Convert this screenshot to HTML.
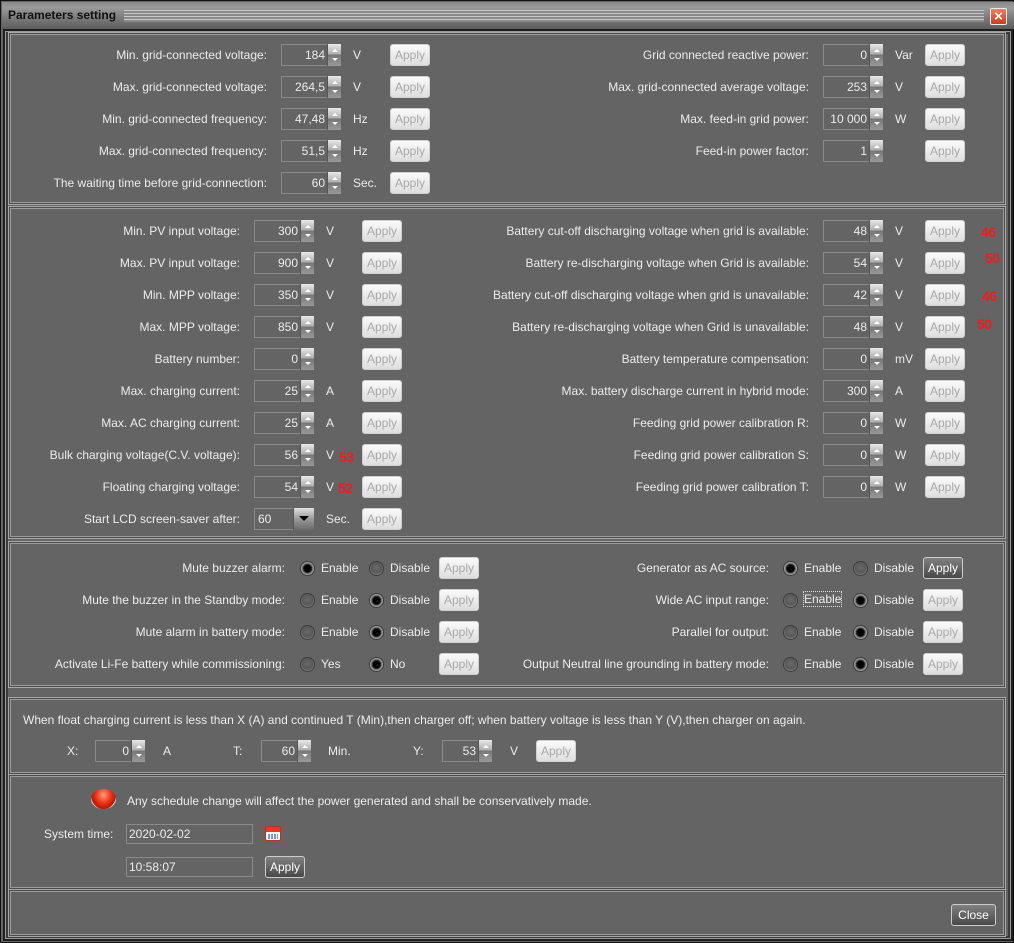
<!DOCTYPE html>
<html><head><meta charset="utf-8">
<style>
*{margin:0;padding:0;box-sizing:border-box}
body{width:1014px;height:943px;background:#2a2a2a;font-family:"Liberation Sans",sans-serif;font-size:12px;color:#ececec;position:relative;overflow:hidden}
.a{position:absolute}
#win{position:absolute;left:0;top:0;width:1014px;height:943px;background:#646464;border:1px solid #111}
#title{position:absolute;left:1px;top:1px;width:1012px;height:27px;background:linear-gradient(#8a8a8a,#9a9a9a 20%,#7a7a7a 60%,#5c5c5c)}
#title .t{position:absolute;left:6px;top:6px;font-weight:bold;color:#111;font-size:12px}
#title .lines{position:absolute;left:122px;right:30px;top:8px;height:12px;background:repeating-linear-gradient(#c8c8c8 0 1px,#8a8a8a 1px 3px)}
#x{position:absolute;left:989px;top:7px;width:17px;height:17px;background:linear-gradient(#f08060,#c83c20);border:1px solid #eee;border-radius:2px;color:#fff;font-size:15px;font-weight:bold;line-height:15px;text-align:center}
#frame{position:absolute;left:2px;top:28px;width:1010px;height:912px;border:2px solid #1e1e1e;box-shadow:inset 0 0 0 1px #9a9a9a,inset 0 0 0 3px #3a3a3a}
.p{position:absolute;left:7px;width:998px;border:1px solid #a8a8a8;box-shadow:inset 0 0 0 1px #4c4c4c,inset 0 0 0 2px #9c9c9c}
.lr{position:absolute;white-space:nowrap;text-align:right;line-height:14px}
.l{position:absolute;white-space:nowrap;line-height:14px}
.sp{position:absolute;width:60px;height:22px;border:1px solid #8a8a8a;}
.sp span{position:absolute;right:15px;top:3px;line-height:14px}
.sp i{position:absolute;right:-1px;top:-1px;width:14px;height:22px;background:linear-gradient(#e8e8e8,#b0b0b0 45%,#777 50%,#9a9a9a);border-left:1px solid #555}
.sp i:before{content:"";position:absolute;left:4px;top:5px;border:3px solid transparent;border-bottom:3px solid #fff;border-top:0}
.sp i:after{content:"";position:absolute;left:4px;top:14px;border:3px solid transparent;border-top:3px solid #fff;border-bottom:0}
.b{position:absolute;width:40px;height:22px;border:1px solid #d0d0d0;border-radius:3px;background:linear-gradient(#fafafa,#dedede);color:#a8a8a8;text-align:center;line-height:20px}
.be{background:linear-gradient(#808080,#484848);color:#fff;border-color:#ccc}
.r{position:absolute;width:15px;height:15px;border-radius:50%;background:radial-gradient(circle at 50% 45%,#6a6a6a,#585858 55%,#8a8a8a 75%,#b8b8b8 90%);border:1px solid #3a3a3a}
.r.on{background:radial-gradient(circle,#000 0 3px,#1a1a1a 4px,#707070 5px,#c8c8c8 7px)}
.red{position:absolute;color:#ee1c1c;font-weight:bold;font-size:14px;letter-spacing:-0.5px}
.tf{position:absolute;width:127px;height:20px;border:1px solid #8a8a8a;padding:2px 2px;line-height:14px}
</style></head><body>
<div id="win">
<div id="title"><div class="t">Parameters setting</div><div class="lines"></div></div>
<div id="x">×</div>
<div id="frame"></div>

<div class="p" style="top:31px;height:173px"></div>
<div class="p" style="top:205px;height:333px"></div>
<div class="p" style="top:540px;height:147px"></div>
<div class="p" style="top:696px;height:78px"></div>
<div class="p" style="top:773px;height:116px"></div>
<div class="p" style="top:888px;height:48px"></div>

<div class="lr" style="right:746px;top:47px">Min. grid-connected voltage:</div>
<div class="sp" style="left:280px;top:43px"><span>184</span><i></i></div><div class="l" style="left:352px;top:47px">V</div><div class="b" style="left:389px;top:43px">Apply</div>
<div class="lr" style="right:746px;top:79px">Max. grid-connected voltage:</div>
<div class="sp" style="left:280px;top:75px"><span>264,5</span><i></i></div><div class="l" style="left:352px;top:79px">V</div><div class="b" style="left:389px;top:75px">Apply</div>
<div class="lr" style="right:746px;top:111px">Min. grid-connected frequency:</div>
<div class="sp" style="left:280px;top:107px"><span>47,48</span><i></i></div><div class="l" style="left:352px;top:111px">Hz</div><div class="b" style="left:389px;top:107px">Apply</div>
<div class="lr" style="right:746px;top:143px">Max. grid-connected frequency:</div>
<div class="sp" style="left:280px;top:139px"><span>51,5</span><i></i></div><div class="l" style="left:352px;top:143px">Hz</div><div class="b" style="left:389px;top:139px">Apply</div>
<div class="lr" style="right:746px;top:175px">The waiting time before grid-connection:</div>
<div class="sp" style="left:280px;top:171px"><span>60</span><i></i></div><div class="l" style="left:352px;top:175px">Sec.</div><div class="b" style="left:389px;top:171px">Apply</div>
<div class="lr" style="right:204px;top:47px">Grid connected reactive power:</div>
<div class="sp" style="left:822px;top:43px"><span>0</span><i></i></div><div class="l" style="left:894px;top:47px">Var</div><div class="b" style="left:924px;top:43px">Apply</div>
<div class="lr" style="right:204px;top:79px">Max. grid-connected average voltage:</div>
<div class="sp" style="left:822px;top:75px"><span>253</span><i></i></div><div class="l" style="left:894px;top:79px">V</div><div class="b" style="left:924px;top:75px">Apply</div>
<div class="lr" style="right:204px;top:111px">Max. feed-in grid power:</div>
<div class="sp" style="left:822px;top:107px"><span>10 000</span><i></i></div><div class="l" style="left:894px;top:111px">W</div><div class="b" style="left:924px;top:107px">Apply</div>
<div class="lr" style="right:204px;top:143px">Feed-in power factor:</div>
<div class="sp" style="left:822px;top:139px"><span>1</span><i></i></div><div class="b" style="left:924px;top:139px">Apply</div>

<div class="lr" style="right:773px;top:223px">Min. PV input voltage:</div>
<div class="sp" style="left:253px;top:219px"><span>300</span><i></i></div><div class="l" style="left:325px;top:223px">V</div><div class="b" style="left:361px;top:219px">Apply</div>
<div class="lr" style="right:773px;top:255px">Max. PV input voltage:</div>
<div class="sp" style="left:253px;top:251px"><span>900</span><i></i></div><div class="l" style="left:325px;top:255px">V</div><div class="b" style="left:361px;top:251px">Apply</div>
<div class="lr" style="right:773px;top:287px">Min. MPP voltage:</div>
<div class="sp" style="left:253px;top:283px"><span>350</span><i></i></div><div class="l" style="left:325px;top:287px">V</div><div class="b" style="left:361px;top:283px">Apply</div>
<div class="lr" style="right:773px;top:319px">Max. MPP voltage:</div>
<div class="sp" style="left:253px;top:315px"><span>850</span><i></i></div><div class="l" style="left:325px;top:319px">V</div><div class="b" style="left:361px;top:315px">Apply</div>
<div class="lr" style="right:773px;top:351px">Battery number:</div>
<div class="sp" style="left:253px;top:347px"><span>0</span><i></i></div><div class="b" style="left:361px;top:347px">Apply</div>
<div class="lr" style="right:773px;top:383px">Max. charging current:</div>
<div class="sp" style="left:253px;top:379px"><span>25</span><i></i></div><div class="l" style="left:325px;top:383px">A</div><div class="b" style="left:361px;top:379px">Apply</div>
<div class="lr" style="right:773px;top:415px">Max. AC charging current:</div>
<div class="sp" style="left:253px;top:411px"><span>25</span><i></i></div><div class="l" style="left:325px;top:415px">A</div><div class="b" style="left:361px;top:411px">Apply</div>
<div class="lr" style="right:773px;top:447px">Bulk charging voltage(C.V. voltage):</div>
<div class="sp" style="left:253px;top:443px"><span>56</span><i></i></div><div class="l" style="left:325px;top:447px">V</div><div class="red" style="left:338px;top:448px">53</div><div class="b" style="left:361px;top:443px">Apply</div>
<div class="lr" style="right:773px;top:479px">Floating charging voltage:</div>
<div class="sp" style="left:253px;top:475px"><span>54</span><i></i></div><div class="l" style="left:325px;top:479px">V</div><div class="red" style="left:337px;top:479px">52</div><div class="b" style="left:361px;top:475px">Apply</div>
<div class="lr" style="right:773px;top:511px">Start LCD screen-saver after:</div>
<div class="sp" style="left:253px;top:507px;"><span style="left:3px;right:auto">60</span><div style="position:absolute;right:-1px;top:-1px;width:21px;height:22px;background:linear-gradient(#e0e0e0,#9a9a9a 50%,#6a6a6a);border-left:1px solid #555"><div style="position:absolute;left:5px;top:8px;border:5px solid transparent;border-top:5px solid #000;border-bottom:0"></div></div></div>
<div class="l" style="left:325px;top:511px">Sec.</div><div class="b" style="left:361px;top:507px">Apply</div>
<div class="lr" style="right:204px;top:223px">Battery cut-off discharging voltage when grid is available:</div>
<div class="sp" style="left:822px;top:219px"><span>48</span><i></i></div><div class="l" style="left:894px;top:223px">V</div><div class="b" style="left:924px;top:219px">Apply</div><div class="red" style="left:980px;top:223px">46</div>
<div class="lr" style="right:204px;top:255px">Battery re-discharging voltage when Grid is available:</div>
<div class="sp" style="left:822px;top:251px"><span>54</span><i></i></div><div class="l" style="left:894px;top:255px">V</div><div class="b" style="left:924px;top:251px">Apply</div><div class="red" style="left:984px;top:249px">50</div>
<div class="lr" style="right:204px;top:287px">Battery cut-off discharging voltage when grid is unavailable:</div>
<div class="sp" style="left:822px;top:283px"><span>42</span><i></i></div><div class="l" style="left:894px;top:287px">V</div><div class="b" style="left:924px;top:283px">Apply</div><div class="red" style="left:981px;top:287px">46</div>
<div class="lr" style="right:204px;top:319px">Battery re-discharging voltage when Grid is unavailable:</div>
<div class="sp" style="left:822px;top:315px"><span>48</span><i></i></div><div class="l" style="left:894px;top:319px">V</div><div class="b" style="left:924px;top:315px">Apply</div><div class="red" style="left:976px;top:315px">50</div>
<div class="lr" style="right:204px;top:351px">Battery temperature compensation:</div>
<div class="sp" style="left:822px;top:347px"><span>0</span><i></i></div><div class="l" style="left:894px;top:351px">mV</div><div class="b" style="left:924px;top:347px">Apply</div>
<div class="lr" style="right:204px;top:383px">Max. battery discharge current in hybrid mode:</div>
<div class="sp" style="left:822px;top:379px"><span>300</span><i></i></div><div class="l" style="left:894px;top:383px">A</div><div class="b" style="left:924px;top:379px">Apply</div>
<div class="lr" style="right:204px;top:415px">Feeding grid power calibration R:</div>
<div class="sp" style="left:822px;top:411px"><span>0</span><i></i></div><div class="l" style="left:894px;top:415px">W</div><div class="b" style="left:924px;top:411px">Apply</div>
<div class="lr" style="right:204px;top:447px">Feeding grid power calibration S:</div>
<div class="sp" style="left:822px;top:443px"><span>0</span><i></i></div><div class="l" style="left:894px;top:447px">W</div><div class="b" style="left:924px;top:443px">Apply</div>
<div class="lr" style="right:204px;top:479px">Feeding grid power calibration T:</div>
<div class="sp" style="left:822px;top:475px"><span>0</span><i></i></div><div class="l" style="left:894px;top:479px">W</div><div class="b" style="left:924px;top:475px">Apply</div>

<div class="lr" style="right:728px;top:560px">Mute buzzer alarm:</div>
<div class="r on" style="left:299px;top:560px"></div><div class="l" style="left:320px;top:560px">Enable</div><div class="r" style="left:368px;top:560px"></div><div class="l" style="left:389px;top:560px">Disable</div><div class="b" style="left:438px;top:556px">Apply</div>
<div class="lr" style="right:728px;top:592px">Mute the buzzer in the Standby mode:</div>
<div class="r" style="left:299px;top:592px"></div><div class="l" style="left:320px;top:592px">Enable</div><div class="r on" style="left:368px;top:592px"></div><div class="l" style="left:389px;top:592px">Disable</div><div class="b" style="left:438px;top:588px">Apply</div>
<div class="lr" style="right:728px;top:624px">Mute alarm in battery mode:</div>
<div class="r" style="left:299px;top:624px"></div><div class="l" style="left:320px;top:624px">Enable</div><div class="r on" style="left:368px;top:624px"></div><div class="l" style="left:389px;top:624px">Disable</div><div class="b" style="left:438px;top:620px">Apply</div>
<div class="lr" style="right:728px;top:656px">Activate Li-Fe battery while commissioning:</div>
<div class="r" style="left:299px;top:656px"></div><div class="l" style="left:320px;top:656px">Yes</div><div class="r on" style="left:368px;top:656px"></div><div class="l" style="left:389px;top:656px">No</div><div class="b" style="left:438px;top:652px">Apply</div>
<div class="lr" style="right:244px;top:560px">Generator as AC source:</div>
<div class="r on" style="left:782px;top:560px"></div><div class="l" style="left:803px;top:560px">Enable</div><div class="r" style="left:852px;top:560px"></div><div class="l" style="left:873px;top:560px">Disable</div><div class="b be" style="left:922px;top:556px">Apply</div>
<div class="lr" style="right:244px;top:592px">Wide AC input range:</div>
<div class="r" style="left:782px;top:592px"></div><div class="l" style="left:803px;top:591px;outline:1px dotted #ddd">Enable</div><div class="r on" style="left:852px;top:592px"></div><div class="l" style="left:873px;top:592px">Disable</div><div class="b" style="left:922px;top:588px">Apply</div>
<div class="lr" style="right:244px;top:624px">Parallel for output:</div>
<div class="r" style="left:782px;top:624px"></div><div class="l" style="left:803px;top:624px">Enable</div><div class="r on" style="left:852px;top:624px"></div><div class="l" style="left:873px;top:624px">Disable</div><div class="b" style="left:922px;top:620px">Apply</div>
<div class="lr" style="right:244px;top:656px">Output Neutral line grounding in battery mode:</div>
<div class="r" style="left:782px;top:656px"></div><div class="l" style="left:803px;top:656px">Enable</div><div class="r on" style="left:852px;top:656px"></div><div class="l" style="left:873px;top:656px">Disable</div><div class="b" style="left:922px;top:652px">Apply</div>

<div class="l" style="left:22px;top:712px">When float charging current is less than X (A) and continued T (Min),then charger off; when battery voltage is less than Y (V),then charger on again.</div>
<div class="l" style="left:66px;top:743px">X:</div>
<div class="sp" style="left:94px;top:739px;width:50px"><span>0</span><i></i></div><div class="l" style="left:162px;top:743px">A</div>
<div class="l" style="left:232px;top:743px">T:</div>
<div class="sp" style="left:260px;top:739px;width:50px"><span>60</span><i></i></div><div class="l" style="left:327px;top:743px">Min.</div>
<div class="l" style="left:412px;top:743px">Y:</div>
<div class="sp" style="left:441px;top:739px;width:50px"><span>53</span><i></i></div><div class="l" style="left:509px;top:743px">V</div>
<div class="b" style="left:535px;top:739px">Apply</div>

<div class="a" style="left:90px;top:788px;width:25px;height:20px;border-radius:50%;background:radial-gradient(ellipse at 50% 30%,#ff9a80,#e83010 45%,#b01800 70%,#e0e0e0 72%,#bbb)"></div>
<div class="l" style="left:126px;top:793px">Any schedule change will affect the power generated and shall be conservatively made.</div>
<div class="l" style="left:43px;top:826px">System time:</div>
<div class="tf" style="left:125px;top:823px">2020-02-02</div>
<div class="a" style="left:264px;top:825px;width:16px;height:15px;background:linear-gradient(#e03a2a 0 5px,#f4f4f4 5px);border:1px solid #c03020;border-radius:2px"><div style="position:absolute;left:2px;top:7px;width:10px;height:5px;background:repeating-linear-gradient(90deg,#7a9ad0 0 2px,transparent 2px 3px)"></div></div>
<div class="tf" style="left:125px;top:856px">10:58:07</div>
<div class="b be" style="left:264px;top:855px;height:22px">Apply</div>

<div class="b be" style="left:950px;top:903px;width:45px">Close</div>
</div>
</body></html>
